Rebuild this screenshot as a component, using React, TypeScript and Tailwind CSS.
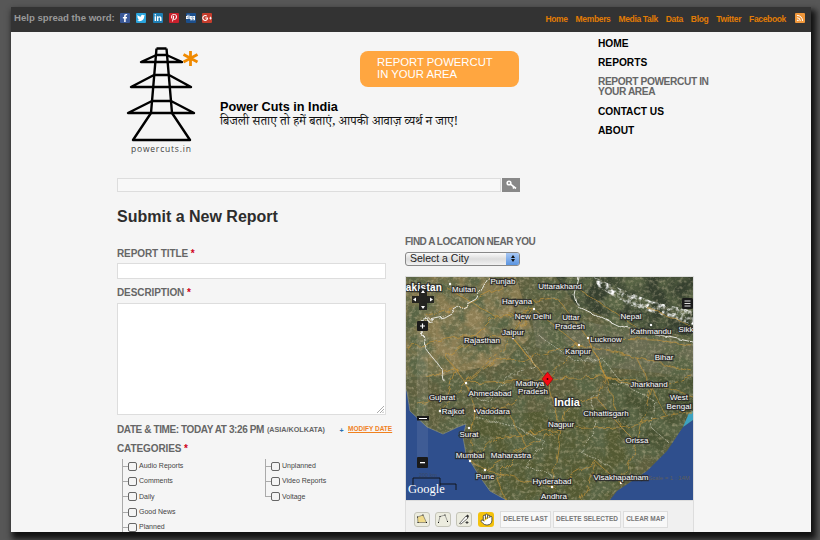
import { Hand, Rss } from "lucide-react";
import { FaDigg, FaFacebookF, FaGooglePlusG, FaLinkedinIn, FaPinterestP, FaTwitter } from "react-icons/fa";

const topLinks = ["Home", "Members", "Media Talk", "Data", "Blog", "Twitter", "Facebook"];

const socials = [
  { Icon: FaFacebookF, size: 8, color: "bg-[#3b5998]" },
  { Icon: FaTwitter, size: 8, color: "bg-[#2aa4dc]" },
  { Icon: FaLinkedinIn, size: 8, color: "bg-[#1f7fb5]" },
  { Icon: FaPinterestP, size: 8, color: "bg-[#c8202c]" },
  { Icon: FaDigg, size: 9, color: "bg-[#1c4f8c]" },
  { Icon: FaGooglePlusG, size: 10, color: "bg-[#c63d2d]" },
];

const categoriesLeft = ["Audio Reports", "Comments", "Daily", "Good News", "Planned"];
const categoriesRight = ["Unplanned", "Video Reports", "Voltage"];

const mapLabels: [string, number, number][] = [
  ["Multan", 58, 15], ["Punjab", 97, 7], ["Uttarakhand", 154, 12], ["Haryana", 111, 27],
  ["New Delhi", 127, 42], ["Uttar", 165, 43], ["Pradesh", 164, 52], ["Nepal", 225, 42],
  ["Kathmandu", 245, 57], ["Sikk", 280, 55], ["Jaipur", 107, 58], ["Rajasthan", 76, 66],
  ["Lucknow", 200, 65], ["Kanpur", 172, 77], ["Bihar", 258, 83], ["Jharkhand", 243, 110],
  ["Madhya", 124, 109], ["Pradesh", 127, 117], ["Ahmedabad", 84, 119], ["Gujarat", 36, 123],
  ["West", 273, 123], ["Bengal", 273, 132], ["Rajkot", 47, 137], ["Vadodara", 87, 137],
  ["Chhattisgarh", 200, 139], ["Nagpur", 155, 150], ["Surat", 63, 160], ["Orissa", 231, 166],
  ["Mumbai", 64, 181], ["Maharastra", 105, 181], ["Pune", 79, 202], ["Hyderabad", 146, 207],
  ["Visakhapatnam", 215, 203], ["Andhra", 148, 222],
];

const cityDots: [number, number][] = [
  [44, 7], [128, 32], [107, 61], [182, 61], [173, 68], [245, 48], [60, 106], [34, 134], [69, 134],
  [63, 151], [155, 152], [64, 184], [79, 193], [146, 210], [215, 206],
];

const roads = [
  "M40 10 L90 40 L128 32 L172 68 L230 80 L287 95",
  "M128 32 L107 61 L60 106 L69 134 L64 184 L79 193 L146 210",
  "M173 68 L141 102 L155 152 L146 210",
  "M155 152 L215 150 L231 166 L215 206",
  "M60 106 L141 102 L200 100 L258 110 L287 120",
  "M182 61 L250 62 L287 70",
  "M0 70 L60 60 L107 61 L130 90",
  "M155 152 L90 160 L64 184",
  "M79 193 L120 170 L155 152",
  "M141 102 L100 130 L69 134",
  "M200 100 L215 150 L261 140 L287 135",
  "M146 210 L190 185 L215 206",
  "M20 40 L60 28 L97 10",
  "M150 20 L182 61 L200 100",
  "M107 61 L125 25 L150 20",
  "M107 61 L141 102",
  "M182 61 L200 100 L230 110",
  "M230 80 L245 110 L231 166",
  "M90 40 L70 60 L40 80",
  "M40 80 L60 106",
  "M34 134 L60 106",
  "M60 106 L90 85 L125 80",
  "M125 80 L173 68",
  "M100 130 L115 160 L120 170",
  "M120 170 L90 200 L100 223",
  "M190 185 L175 223",
  "M190 120 L160 130 L155 152",
  "M261 140 L245 110 L287 100",
  "M215 150 L190 120 L200 100",
  "M230 50 L200 30 L172 12",
  "M240 30 L287 50",
  "M20 100 L50 90 L40 120 L10 125",
];

const stateBorders = [
  "M118 70 L130 90 L100 100 L82 125 L62 118",
  "M135 60 L170 85 L195 80 L215 105",
  "M215 105 L185 120 L190 150 L175 175 L205 190",
  "M70 140 L110 150 L140 165 L120 190 L150 200",
  "M215 105 L250 125 L245 150 L262 165",
];

function TowerLogo() {
  return (
    <svg width="74" height="96" viewBox="125 45 74 96" fill="none" stroke="#000" strokeWidth="2.400" strokeLinejoin="round">
      <path d="M155.500 47.500 L165.500 47.500 M155.500 47.500 L150 112 L132 139 L189 139 L171 112 L165.500 47.500" />
      <path d="M155.500 54 L140 61 L181 61 L165.500 54 M155.500 54 L165.500 54" />
      <path d="M153 74 L130 86 L190 86 L168 74 M153 74 L168 74" />
      <path d="M151 100 L127 112 L193 112 L170 100 M151 100 L170 100" />
      <path d="M189.500 50 L189.500 65 M182.500 53.500 L196.500 61 M196.500 53.500 L182.500 61" stroke="#f08a00" strokeWidth="2.800" />
    </svg>
  );
}

function SatelliteMap() {
  const water = "M0 112 L1 115 L4 134 L21 150 L37 157 L52 150 L60 147 L57 160 L60 177 L66 187 L74 200 L84 214 L100 223 L0 223 Z";
  const bay = "M204 223 L211 214 L241 194 L261 174 L277 150 L287 143 L287 223 Z";
  return (
    <svg width="287" height="223" viewBox="0 0 287 223" className="block font-['Liberation_Sans',sans-serif]">
      <defs>
        <filter id="mottle" x="0" y="0" width="100%" height="100%">
          <feTurbulence type="fractalNoise" baseFrequency="0.05" numOctaves="5" seed="7" />
          <feColorMatrix values="0 0 0 0 0.10  0 0 0 0 0.13  0 0 0 0 0.06  3 0 0 0 -1.100" />
        </filter>
        <filter id="grain" x="0" y="0" width="100%" height="100%">
          <feTurbulence type="fractalNoise" baseFrequency="0.3" numOctaves="3" seed="3" />
          <feColorMatrix values="0 0 0 0 0.85  0 0 0 0 0.72  0 0 0 0 0.48  0 2.500 0 0 -1.150" />
        </filter>
        <filter id="snow" x="0" y="0" width="100%" height="100%">
          <feTurbulence type="fractalNoise" baseFrequency="0.22" numOctaves="3" seed="11" />
          <feColorMatrix values="0 0 0 0 1  0 0 0 0 1  0 0 0 0 1  2.600 0 0 0 -1.100" />
          <feComposite in2="SourceAlpha" operator="in" />
        </filter>
        <filter id="wiggle" x="-5%" y="-5%" width="110%" height="110%">
          <feTurbulence type="fractalNoise" baseFrequency="0.09" numOctaves="2" seed="5" />
          <feDisplacementMap in="SourceGraphic" scale="9" />
        </filter>
      </defs>

      <rect width="287" height="223" fill="#5e5f3e" />
      <path d="M0 0 L110 0 L125 50 L100 85 L30 100 L0 100 Z" fill="#85794f" />
      <path d="M30 30 L100 20 L125 60 L90 90 L30 80 Z" fill="#8e7f55" />
      <path d="M150 0 L287 0 L287 60 L220 48 L170 28 Z" fill="#36402f" />
      <path d="M125 35 L220 52 L287 68 L287 100 L200 90 L130 70 Z" fill="#6a6c52" />
      <path d="M60 140 L200 130 L230 190 L200 223 L100 223 L70 190 Z" fill="#545a33" />
      <path d="M200 100 L287 100 L287 140 L250 180 L215 160 Z" fill="#485233" />
      <rect width="287" height="223" filter="url(#mottle)" />
      <rect width="287" height="223" filter="url(#grain)" opacity="0.35" />
      <path d="M188 0 L215 12 L245 24 L287 34 L287 48 L255 38 L222 28 L192 10 Z" fill="#fff" filter="url(#snow)" />

      <path d={water} fill="#2f4f8d" />
      <path d={bay} fill="#2f4f8d" />
      <path d="M0 112 L1 115 L4 134 L21 150 L37 157 L52 150 L60 147 L57 160 L60 177 L66 187 L74 200 L84 214 L100 223" stroke="#a9a887" strokeWidth="0.800" fill="none" opacity="0.6" />
      <path d="M277 150 L283 136 L287 134 L287 143 Z" fill="#3da3c2" />

      <g fill="none" stroke="#c2923a" strokeWidth="0.700" filter="url(#wiggle)">
        {roads.map((d) => (
          <path key={d} d={d} />
        ))}
      </g>
      <g fill="none" stroke="#d8d8c8" strokeWidth="0.700" strokeDasharray="2 1" opacity="0.85" filter="url(#wiggle)">
        {stateBorders.map((d) => (
          <path key={d} d={d} />
        ))}
      </g>
      <g fill="none" stroke="#e4e4dc" strokeWidth="1" filter="url(#wiggle)">
        <path d="M83 0 L70 22 L38 40 L15 45 L18 70 L36 92 L38 104" />
        <path d="M172 -1 L168 18 L171 29 L215 50 L287 65" />
      </g>

      {/* zoom slider rail */}
      <rect x="11" y="44" width="11" height="137" fill="#fff" opacity="0.08" />
      <g fill="#fff">
        {cityDots.map(([x, y]) => (
          <circle key={`${x}-${y}`} cx={x} cy={y} r="1.200" />
        ))}
      </g>

      <g fontSize="8" fill="#fff" stroke="#2a2a2a" strokeOpacity="0.85" strokeWidth="2.500" textAnchor="middle" style={{ paintOrder: "stroke" }}>
        {mapLabels.map(([label, x, y]) => (
          <text key={`${label}-${x}`} x={x} y={y}>
            {label}
          </text>
        ))}
        <text x="18" y="14" fontSize="10" fontWeight="700" letterSpacing="0.300">
          akistan
        </text>
        <text x="161" y="129" fontSize="11" fontWeight="700">
          India
        </text>
      </g>

      {/* marker */}
      <path d="M141.500 95 L147 102 L141.500 109 L136 102 Z" fill="#f40a12" stroke="#8d0000" strokeWidth="0.500" />
      <circle cx="141.500" cy="102" r="0.900" fill="#300" />

      {/* pan control */}
      <path d="M13 12 L13 19 L6 19 L6 26 L13 26 L13 33 L21 33 L21 26 L28 26 L28 19 L21 19 L21 12 Z" fill="#1b1b1b" opacity="0.9" />
      <path d="M17 13 L19 16 L15 16 Z M17 32 L19 29 L15 29 Z M7 22.500 L10 20.500 L10 24.500 Z M27 22.500 L24 20.500 L24 24.500 Z" fill="#fff" />

      {/* zoom control */}
      <rect x="11" y="44" width="11" height="10" rx="1" fill="#1a1a1a" />
      <path d="M14 49 H19 M16.500 46.500 V51.500" stroke="#fff" strokeWidth="1.200" />
      <rect x="11" y="139" width="12" height="4.500" fill="#1a1a1a" />
      <rect x="13" y="141" width="8" height="1" fill="#fff" />
      <rect x="11" y="180" width="11" height="11" rx="1" fill="#1a1a1a" />
      <rect x="14" y="185" width="5" height="1.300" fill="#fff" />

      {/* layers */}
      <rect x="276" y="21" width="11" height="11" rx="1.500" fill="#1a1a1a" />
      <path d="M278.500 24 H284.500 M278.500 26.500 H284.500 M278.500 29 H284.500" stroke="#ddd" strokeWidth="1.200" />

      {/* scale and attribution */}
      <path d="M7 209 V201 H34 V209 M34 207 H50 V213" fill="none" stroke="#111" strokeWidth="0.900" />
      <text x="13" y="200" fontSize="5.500" fill="#3b4a66">
        200 km
      </text>
      <text x="242" y="203" fontSize="6" fill="#5d5d5d">
        Scale = 1 : 14M
      </text>
      <text x="2" y="216" fontSize="12.500" fill="#fff" fontFamily="'Liberation Serif', serif">
        Google
      </text>
    </svg>
  );
}

function CategoryColumn({ items, lineClass }: { items: string[]; lineClass: string }) {
  return (
    <ul className={`border-l border-[#aaa] ${lineClass}`}>
      {items.map((item) => (
        <li key={item} className="flex h-[15.300px] items-center">
          <span className="h-px w-[5px] bg-[#aaa]" />
          <span className="h-[9px] w-[9px] rounded-[2px] border border-[#666] bg-[#f4f4f4]" />
          <span className="ml-[2px] text-[7px] text-[#444]">{item}</span>
        </li>
      ))}
    </ul>
  );
}

export default function App() {
  return (
    <div className="h-[540px] w-[820px] overflow-hidden bg-[#575757] pl-[11px] pt-[7px] font-['Liberation_Sans',Arial,sans-serif]">
      <div className="h-[525px] w-[800px] overflow-hidden bg-[#f5f5f5] shadow-[3px_5px_6px_2px_#111]">
        {/* top bar */}
        <div className="flex h-[25px] items-center justify-between bg-[#333] pl-[3px] pr-[6px]">
          <div className="flex items-center">
            <span className="mb-[3px] text-[9.600px] font-bold text-[#999]">Help spread the word:</span>
            <div className="mb-[3px] ml-[5px] flex gap-[6.500px]">
              {socials.map(({ Icon, size, color }) => (
                <span key={color} className={`flex h-[10px] w-[10px] items-center justify-center overflow-hidden rounded-[1px] text-white ${color}`}>
                  <Icon size={size} />
                </span>
              ))}
            </div>
          </div>
          <div className="flex items-center gap-[8px]">
            {topLinks.map((link) => (
              <span key={link} className="text-[8.500px] font-bold tracking-[-0.350px] text-[#e27c05]">
                {link}
              </span>
            ))}
            <span className="mb-[3px] ml-[1px] flex h-[10px] w-[10px] items-center justify-center rounded-[1px] bg-[#f0973a]">
              <Rss size={8} strokeWidth={3} className="text-white" />
            </span>
          </div>
        </div>

        {/* masthead */}
        <div className="flex pl-[106px]">
          <div className="w-[481px]">
            <div className="flex pl-[9px] pt-[14px]">
              <div className="flex w-[94px] flex-col">
                <TowerLogo />
                <span className="ml-[5px] mt-[1px] font-['Open_Sans',sans-serif] text-[8.500px] tracking-[0.800px] text-[#444]">powercuts.in</span>
              </div>
              <div>
                <div className="ml-[140px] mt-[5px] h-[36px] w-[159px] rounded-[8px] bg-[#ffa640] pl-[17px] pt-[5px] text-[11.300px] leading-[12px] text-white">
                  REPORT POWERCUT
                  <br />
                  IN YOUR AREA
                </div>
                <div className="mt-[13px] text-[12.700px] font-bold leading-[15px] text-black">Power Cuts in India</div>
                <div className="mt-[1px] whitespace-nowrap font-['Noto_Serif_Devanagari','Noto_Sans_Devanagari','Lohit_Devanagari','FreeSerif',serif] text-[12.500px] leading-[15px] text-[#111]">
                  बिजली सताए तो हमें बताएं, आपकी आवाज़ व्यर्थ न जाए!
                </div>
              </div>
            </div>

            {/* search */}
            <div className="mt-[22px] flex h-[14px] w-[403px]">
              <div className="h-[14px] w-[384px] border border-[#ddd] bg-[#f8f8f8]" />
              <div className="ml-[1px] flex h-[14px] w-[18px] items-center justify-center bg-[#888]">
                <svg width="11" height="10" viewBox="0 0 11 10" fill="none" stroke="#fff" strokeWidth="1.600">
                  <circle cx="3" cy="3" r="1.800" />
                  <path d="M4.500 4.200 L10 8.500 M8 7 L7 8.500" />
                </svg>
              </div>
            </div>
          </div>

          {/* site nav */}
          <nav className="w-[130px] pt-[7px] text-[10.200px] font-bold leading-[10px] text-black">
            <div className="mb-[9px]">HOME</div>
            <div className="mb-[9px]">REPORTS</div>
            <div className="mb-[10px] whitespace-nowrap tracking-[-0.400px] text-[#666]">
              REPORT POWERCUT IN
              <br />
              YOUR AREA
            </div>
            <div className="mb-[9px]">CONTACT US</div>
            <div>ABOUT</div>
          </nav>
        </div>

        {/* form */}
        <div className="flex pl-[106px]">
          <div className="w-[269px]">
            <h1 className="mt-[15px] text-[16px] font-bold leading-[20px] text-[#2d2d2d]">Submit a New Report</h1>
            <label className="mt-[22px] block text-[10px] font-bold leading-[10px] tracking-[-0.100px] text-[#666]">
              REPORT TITLE <span className="text-[#d0021b]">*</span>
            </label>
            <div className="mt-[4px] h-[16px] border border-[#ddd] bg-white" />
            <label className="mt-[9px] block text-[10px] font-bold leading-[10px] tracking-[-0.100px] text-[#666]">
              DESCRIPTION <span className="text-[#d0021b]">*</span>
            </label>
            <div className="relative mt-[5px] h-[112px] border border-[#ddd] bg-white">
              <svg width="7" height="7" viewBox="0 0 7 7" className="absolute bottom-[1px] right-[1px]" stroke="#888" strokeWidth="0.700">
                <path d="M0 7 L7 0 M3 7 L7 3 M5.500 7 L7 5.500" />
              </svg>
            </div>
            <div className="mt-[9px] flex h-[12px] w-[280px] items-center whitespace-nowrap font-bold text-[#666]">
              <span className="text-[10px] tracking-[-0.400px]">DATE &amp; TIME: TODAY AT 3:26 PM</span>
              <span className="ml-[3px] mt-[1px] text-[7.200px]">(ASIA/KOLKATA)</span>
              <span className="ml-[13px] mt-[1px] h-[7px] w-[7px] text-center text-[7px] leading-[7px] text-[#2a6fb0]">+</span>
              <span className="mb-[2px] ml-[3px] text-[6.500px] text-[#f0811e] underline">MODIFY DATE</span>
            </div>
            <label className="mt-[8px] block text-[10px] font-bold leading-[10px] tracking-[-0.100px] text-[#666]">
              CATEGORIES <span className="text-[#d0021b]">*</span>
            </label>
            <div className="ml-[5px] mt-[5px] flex">
              <CategoryColumn items={categoriesLeft} lineClass="w-[143px]" />
              <CategoryColumn items={categoriesRight} lineClass="h-[38px] w-[120px]" />
            </div>
          </div>

          <div className="ml-[19px] w-[289px] pt-[45px]">
            <label className="block text-[10px] font-bold leading-[10px] tracking-[-0.500px] text-[#666]">FIND A LOCATION NEAR YOU</label>
            <div className="mt-[5px] flex h-[14px] w-[115px] items-center justify-between rounded-[3px] border border-[#888] bg-gradient-to-b from-[#fafafa] via-[#dcdcdc] to-[#f2f2f2] pl-[4px]">
              <span className="text-[10.500px] text-[#222]">Select a City</span>
              <span className="flex h-full w-[13px] flex-col items-center justify-center gap-[1px] rounded-r-[2px] bg-gradient-to-b from-[#a8c8f4] to-[#5a94e0]">
                <span className="h-0 w-0 border-x-[2px] border-b-[3px] border-x-transparent border-b-[#111]" />
                <span className="h-0 w-0 border-x-[2px] border-t-[3px] border-x-transparent border-t-[#111]" />
              </span>
            </div>
            <div className="mt-[10px] border border-[#ddd]">
              <SatelliteMap />
              <div className="flex h-[40px] items-start border-t border-[#ddd] bg-[#f0f0f0] pl-[8px] pt-[11px]">
                <button className="flex h-[15px] w-[16px] items-center justify-center rounded-[3px] border border-[#c4c4b8] bg-[#ececdf]">
                  <svg width="12" height="10" viewBox="0 0 12 10">
                    <path d="M1.500 3 L7 1 L10.500 8.500 L2 8.500 Z" fill="#f1db8a" stroke="#444" strokeWidth="0.500" />
                    <path d="M1 2.500 h1 v1 h-1 Z M6.500 0.500 h1 v1 h-1 Z M10 8 h1 v1 h-1 Z M1.500 8 h1 v1 h-1 Z" fill="#111" />
                  </svg>
                </button>
                <button className="ml-[5px] flex h-[15px] w-[16px] items-center justify-center rounded-[3px] border border-[#c4c4b8] bg-[#ececdf]">
                  <svg width="12" height="10" viewBox="0 0 12 10">
                    <path d="M1.500 8.500 L3 2.500 L8 1 L10.500 7.500" fill="none" stroke="#555" strokeWidth="0.500" />
                    <path d="M1 8 h1 v1 h-1 Z M2.500 2 h1 v1 h-1 Z M7.500 0.500 h1 v1 h-1 Z M10 7 h1 v1 h-1 Z" fill="#111" />
                  </svg>
                </button>
                <button className="ml-[5px] flex h-[15px] w-[16px] items-center justify-center rounded-[3px] border border-[#c4c4b8] bg-[#ececdf]">
                  <svg width="12" height="12" viewBox="0 0 12 12">
                    <path d="M1.500 10.500 L8 3 L10 5 L3 11 Z" fill="#fff" stroke="#333" strokeWidth="0.700" />
                    <path d="M8 3 L9.500 1.500 L11 3 L10 5 Z" fill="#333" />
                    <path d="M7.500 9.500 H10.500 M9 8 V11" stroke="#222" strokeWidth="0.800" />
                  </svg>
                </button>
                <button className="ml-[6px] flex h-[15px] w-[16px] items-center justify-center rounded-[3px] bg-[#f4c20d]">
                  <Hand size={13} className="fill-white text-[#333]" strokeWidth={1.500} />
                </button>
                {["DELETE LAST", "DELETE SELECTED", "CLEAR MAP"].map((text, i) => (
                  <button
                    key={text}
                    className={`-mt-px h-[17px] whitespace-nowrap border border-[#ddd] bg-[#f8f8f8] text-[6.500px] font-bold text-[#777] ${i === 0 ? "ml-[6px] w-[51px]" : i === 1 ? "ml-[2px] w-[68px]" : "ml-[2px] w-[45px]"}`}
                  >
                    {text}
                  </button>
                ))}
              </div>
            </div>
          </div>
        </div>
      </div>
    </div>
  );
}
